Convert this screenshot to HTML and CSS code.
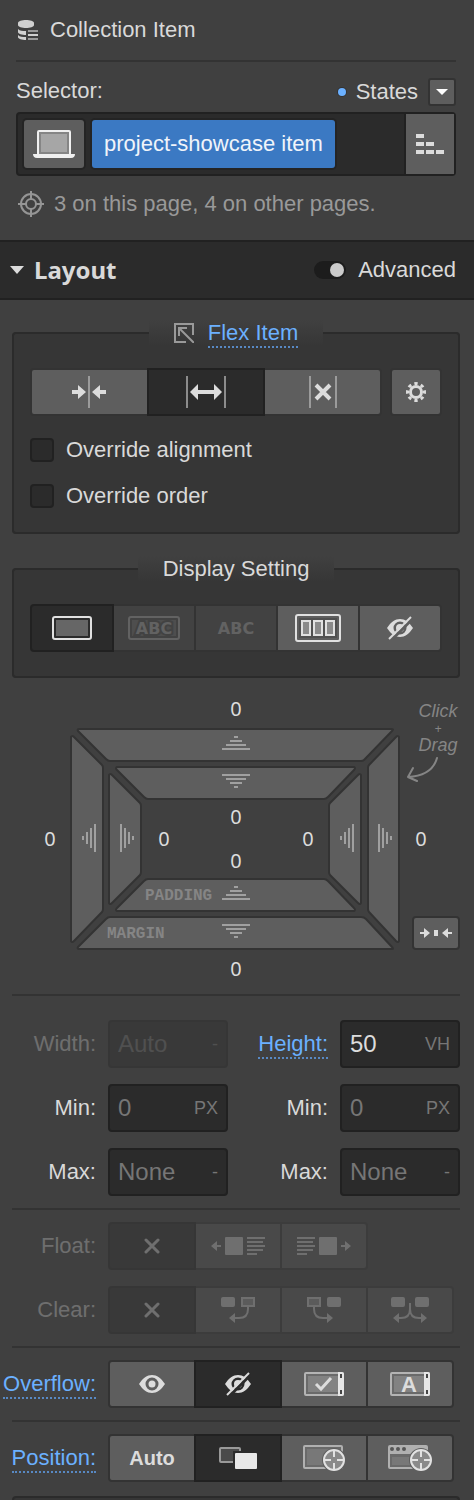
FILE: index.html
```html
<!DOCTYPE html>
<html lang="en">
<head>
  <meta charset="UTF-8">
  <meta name="viewport" content="width=device-width, initial-scale=1.0">
  <title>Style Panel</title>
  <link rel="stylesheet" href="styles.css">
</head>
<body>
  <!-- Shared icons -->
  <svg class="sprite" aria-hidden="true">
    <symbol id="eye" viewBox="0 0 26 18">
      <path fill="currentColor" fill-rule="evenodd" d="M0 9C4 3 8 0 13 0s9 3 13 9c-4 6-8 9-13 9S4 15 0 9zM13 2.500a6.500 6.500 0 1 0 0 13a6.500 6.500 0 1 0 0-13z"/>
      <circle cx="13" cy="9" r="3.500" fill="currentColor"/>
    </symbol>
    <symbol id="eye-off" viewBox="0 0 26 24">
      <path fill="currentColor" fill-rule="evenodd" d="M0 12C4 6 8 3 13 3s9 3 13 9c-4 6-8 9-13 9S4 18 0 12zM13 5.500a6.500 6.500 0 1 0 0 13a6.500 6.500 0 1 0 0-13z"/>
      <circle cx="13" cy="12" r="4" fill="currentColor"/>
      <path class="cut" d="M4 24.500L26 2.500" stroke-width="3"/>
      <path d="M2 23L24 1" stroke="currentColor" stroke-width="2"/>
    </symbol>
    <symbol id="cross" viewBox="0 0 16 16">
      <path d="M2 2l12 12M14 2L2 14" stroke="currentColor" stroke-width="3" stroke-linecap="round"/>
    </symbol>
    <symbol id="ticks" viewBox="0 0 28 14">
      <path fill="#a0a0a0" d="M12 0h4v2h-4zM8 4h12v2H8zM4 8h20v2H4zM0 12h28v2H0z"/>
    </symbol>
    <symbol id="globe" viewBox="0 0 24 24">
      <circle fill="#5e5e5e" cx="12" cy="12" r="12"/>
      <circle cx="12" cy="12" r="10" fill="#8a8a8a" stroke="#e2e2e2" stroke-width="2"/>
      <path d="M12 2v7M12 15v7M2 12h7M15 12h7" stroke="#e2e2e2" stroke-width="2"/>
    </symbol>
  </svg>

  <header class="element-head">
    <svg width="20" height="20" viewBox="0 0 20 20">
      <path fill="#d0d0d0" d="M0 3c0-4 16-4 16 0v2c0 4-16 4-16 0z"/>
      <path fill="#d0d0d0" d="M0 9c2 2 4 2 8 2v4c-4 0-8-1-8-3zM0 15c2 2 4 2 8 2v3c-4 0-8-1-8-3z"/>
      <path fill="#9a9a9a" d="M10 10h10v2H10zM10 18h10v2H10z"/>
      <path fill="#d0d0d0" d="M10 14h10v2H10z"/>
    </svg>
    <span>Collection Item</span>
  </header>

  <!-- Selector -->
  <section class="selector">
    <div class="selector-row">
      <label for="selectorInput">Selector:</label>
      <div class="states">
        <span class="dot"></span>
        <span>States</span>
        <button class="states-btn" aria-label="Choose state">
          <svg width="12" height="6" viewBox="0 0 12 6"><path fill="#fff" d="M0 0h12L6 6z"/></svg>
        </button>
      </div>
    </div>
    <div class="selector-box">
      <button class="device-btn" aria-label="Desktop">
        <svg width="42" height="28" viewBox="0 0 42 28">
          <rect x="5" y="1" width="32" height="24" rx="1" fill="#858585" stroke="#f0f0f0" stroke-width="2"/>
          <rect x="8" y="4" width="26" height="18" fill="#a6a6a6"/>
          <path fill="#f0f0f0" d="M0 24h42c0 2-1 4-4 4H4c-3 0-4-2-4-4z"/>
        </svg>
      </button>
      <button class="chip">project-showcase item</button>
      <input class="selector-input" id="selectorInput" type="text">
      <button class="inherit-btn" aria-label="Inheritance">
        <svg width="28" height="20" viewBox="0 0 28 20"><path fill="#dcdcdc" d="M0 0h8v4H0zM0 8h8v4H0zM10 8h8v4h-8zM0 16h8v4H0zM10 16h8v4h-8zM20 16h8v4h-8z"/></svg>
      </button>
    </div>
    <p class="usage">
      <svg width="26" height="26" viewBox="0 0 26 26" fill="none" stroke="#959595" stroke-width="2">
        <circle cx="13" cy="13" r="10"/>
        <circle cx="13" cy="13" r="5"/>
        <path d="M13 0v8M13 18v8M0 13h8M18 13h8"/>
      </svg>
      <span>3 on this page, 4 on other pages.</span>
    </p>
  </section>

  <div class="section-head">
    <svg width="14" height="8" viewBox="0 0 14 8"><path fill="#dcdcdc" d="M0 0h14L7 8z"/></svg>
    <h2>Layout</h2>
    <input class="toggle" type="checkbox" id="advanced" checked>
    <label for="advanced">Advanced</label>
  </div>

  <main>
    <!-- Flex item -->
    <fieldset class="group-box">
      <legend>
        <svg width="20" height="20" viewBox="0 0 20 20" fill="none" stroke="#999" stroke-width="2">
          <path d="M12 19H1V1h18v11M5 13V5h8M6 6l14 14"/>
        </svg>
        <a href="#" class="set">Flex Item</a>
      </legend>
      <div class="btn-line">
        <div class="btn-group">
          <button class="btn" aria-label="Shrink if needed">
            <svg width="34" height="32" viewBox="0 0 34 32">
              <path fill="#9b9b9b" d="M16 0h2v32h-2z"/>
              <path fill="#dcdcdc" d="M0 14h6V9l8 7-8 7v-5H0zM34 14h-6V9l-8 7 8 7v-5h6z"/>
            </svg>
          </button>
          <button class="btn active" aria-label="Grow if possible">
            <svg width="40" height="32" viewBox="0 0 40 32">
              <path fill="#8c8c8c" d="M0 0h2v32H0zM38 0h2v32h-2z"/>
              <path fill="#dcdcdc" d="M4 16l8-8v6h16V8l8 8-8 8v-6H12v6z"/>
            </svg>
          </button>
          <button class="btn" aria-label="Do not shrink or grow">
            <svg width="28" height="32" viewBox="0 0 28 32">
              <path fill="#9b9b9b" d="M0 0h2v32H0zM26 0h2v32h-2z"/>
              <path stroke="#dcdcdc" stroke-width="4" d="M7 9l14 14M21 9L7 23"/>
            </svg>
          </button>
        </div>
        <button class="btn btn-gear" aria-label="Customize">
          <svg width="20" height="20" viewBox="0 0 20 20" fill="none" stroke="#dcdcdc" stroke-width="3">
            <circle cx="10" cy="10" r="5.500"/>
            <circle cx="10" cy="10" r="8.500" pathLength="16" stroke-dasharray="1 1" stroke-dashoffset="0.500"/>
          </svg>
        </button>
      </div>
      <div class="check-row">
        <input type="checkbox" id="alignment">
        <label for="alignment">Override alignment</label>
      </div>
      <div class="check-row">
        <input type="checkbox" id="order">
        <label for="order">Override order</label>
      </div>
    </fieldset>

    <!-- Display -->
    <fieldset class="group-box display-box">
      <legend>Display Setting</legend>
      <div class="btn-group">
        <button class="btn active" aria-label="Block">
          <svg width="40" height="24" viewBox="0 0 40 24">
            <rect x="1" y="1" width="38" height="22" rx="2" fill="none" stroke="#e0e0e0" stroke-width="2"/>
            <rect x="4" y="4" width="32" height="16" fill="#666"/>
          </svg>
        </button>
        <button class="btn off" disabled aria-label="Inline block">
          <svg width="52" height="24" viewBox="0 0 52 24">
            <rect x="1" y="1" width="50" height="22" rx="2" fill="none" stroke="#626262" stroke-width="2"/>
            <rect x="4" y="4" width="44" height="16" fill="#4e4e4e"/>
            <text class="abc outlined" x="26" y="18" text-anchor="middle">ABC</text>
          </svg>
        </button>
        <button class="btn off" disabled><span class="abc">ABC</span></button>
        <button class="btn" aria-label="Flex">
          <svg width="46" height="28" viewBox="0 0 46 28" fill="none" stroke="#e0e0e0" stroke-width="2">
            <rect x="1" y="1" width="44" height="26" rx="2"/>
            <path fill="#505050" stroke="none" d="M4 4h38v20H4z"/>
            <path fill="#8a8a8a" d="M7 7h8v14H7zM19 7h8v14h-8zM31 7h8v14h-8z"/>
          </svg>
        </button>
        <button class="btn" aria-label="None"><svg class="icon" width="26" height="24"><use href="#eye-off"/></svg></button>
      </div>
    </fieldset>

    <!-- Margin and padding -->
    <div class="box-model">
      <svg class="box-svg" viewBox="12 696 448 298">
        <g fill="#5e5e5e" stroke="#333" stroke-width="2" stroke-linejoin="round">
          <path d="M79 729H392Q394 729 392 731L364 760Q363 761 361 761H110Q108 761 106 759L78 731Q77 729 79 729z"/>
          <path d="M79 949H392Q394 949 392 947L366 919Q364 917 361 917H110Q108 917 106 919L78 947Q77 949 79 949z"/>
          <path d="M71 737Q72 735 74 737L102 765Q103 766 103 768V909Q103 911 102 912L74 941Q72 943 71 941z"/>
          <path d="M399 737Q398 735 396 737L369 765Q368 766 368 768V909Q368 911 369 912L396 941Q398 943 399 941z"/>
          <path d="M117 767H354Q356 768 354 770L328 797Q326 799 324 799H148Q146 799 144 797L117 770Q115 768 117 767z"/>
          <path d="M117 911H354Q356 910 354 908L328 881Q326 879 324 879H148Q146 879 144 881L117 908Q115 910 117 911z"/>
          <path d="M109 775Q110 773 112 775L140 803Q141 804 141 806V872Q141 874 140 875L112 903Q110 905 109 903z"/>
          <path d="M361 775Q360 773 358 775L330 803Q329 804 329 806V872Q329 874 330 875L358 903Q360 905 361 903z"/>
        </g>
        <use href="#ticks" x="222" y="736" width="28" height="14"/>
        <use href="#ticks" x="222" y="886" width="28" height="14"/>
        <use href="#ticks" x="-14" y="-7" width="28" height="14" transform="translate(236 781) rotate(180)"/>
        <use href="#ticks" x="-14" y="-7" width="28" height="14" transform="translate(236 931) rotate(180)"/>
        <use href="#ticks" x="-14" y="-7" width="28" height="14" transform="translate(89 838) rotate(-90)"/>
        <use href="#ticks" x="-14" y="-7" width="28" height="14" transform="translate(347 838) rotate(-90)"/>
        <use href="#ticks" x="-14" y="-7" width="28" height="14" transform="translate(127 838) rotate(90)"/>
        <use href="#ticks" x="-14" y="-7" width="28" height="14" transform="translate(385 838) rotate(90)"/>
        <g class="value">
          <text x="236" y="716">0</text>
          <text x="236" y="824">0</text>
          <text x="236" y="868">0</text>
          <text x="236" y="976">0</text>
          <text x="50" y="846">0</text>
          <text x="164" y="846">0</text>
          <text x="308" y="846">0</text>
          <text x="421" y="846">0</text>
        </g>
        <g class="box-name">
          <text x="145" y="900">PADDING</text>
          <text x="107" y="938">MARGIN</text>
        </g>
        <g class="hint">
          <text x="438" y="717">Click</text>
          <text class="plus" x="438" y="733">+</text>
          <text x="438" y="751">Drag</text>
        </g>
        <path fill="none" stroke="#858585" stroke-width="2" stroke-linecap="round" stroke-linejoin="round" d="M437 758C434 769 426 776 408 777M413 768l-5 9 9 4"/>
      </svg>
      <button class="auto-margin" aria-label="Center element">
        <svg width="32" height="10" viewBox="0 0 32 10"><path fill="#dcdcdc" d="M0 4h4V0l6 5-6 5V6H0zM14 2h4v6h-4zM32 4h-4V0l-6 5 6 5V6h4z"/></svg>
      </button>
    </div>

    <!-- Size -->
    <div class="size-grid">
      <label for="width" class="dim">Width:</label>
      <div class="field dim"><input id="width" type="text" placeholder="Auto" disabled><span>-</span></div>
      <label for="height"><span class="set">Height:</span></label>
      <div class="field"><input id="height" type="text" value="50"><span>VH</span></div>
      <label for="minWidth">Min:</label>
      <div class="field"><input id="minWidth" type="text" placeholder="0"><span>PX</span></div>
      <label for="minHeight">Min:</label>
      <div class="field"><input id="minHeight" type="text" placeholder="0"><span>PX</span></div>
      <label for="maxWidth">Max:</label>
      <div class="field"><input id="maxWidth" type="text" placeholder="None"><span>-</span></div>
      <label for="maxHeight">Max:</label>
      <div class="field"><input id="maxHeight" type="text" placeholder="None"><span>-</span></div>
    </div>

    <!-- Float and clear -->
    <div class="option-rows">
      <div class="option dim">
        <span class="option-name" id="floatName">Float:</span>
        <div class="btn-group three" role="group" aria-labelledby="floatName">
          <button class="btn active" disabled aria-label="None"><svg class="icon" width="16" height="16"><use href="#cross"/></svg></button>
          <button class="btn" disabled aria-label="Left">
            <svg width="54" height="18" viewBox="0 0 54 18" fill="#dcdcdc">
              <path d="M0 9l6-5v4h4v2H6v4z"/>
              <rect x="14" width="18" height="18" rx="1"/>
              <path d="M36 0h18v2H36zM36 4h16v2H36zM36 8h18v2H36zM36 12h16v2H36zM36 16h10v2H36z"/>
            </svg>
          </button>
          <button class="btn" disabled aria-label="Right">
            <svg width="54" height="18" viewBox="0 0 54 18" fill="#dcdcdc">
              <path d="M54 9l-6-5v4h-4v2h4v4z"/>
              <rect x="22" width="18" height="18" rx="1"/>
              <path d="M0 0h18v2H0zM0 4h16v2H0zM0 8h18v2H0zM0 12h16v2H0zM0 16h10v2H0z"/>
            </svg>
          </button>
        </div>
      </div>
      <div class="option dim">
        <span class="option-name" id="clearName">Clear:</span>
        <div class="btn-group" role="group" aria-labelledby="clearName">
          <button class="btn active" disabled aria-label="None"><svg class="icon" width="16" height="16"><use href="#cross"/></svg></button>
          <button class="btn" disabled aria-label="Left">
            <svg width="34" height="26" viewBox="0 0 34 26">
              <rect width="14" height="10" rx="2" fill="#dcdcdc"/>
              <rect x="21" y="1" width="12" height="8" fill="#999" stroke="#dcdcdc" stroke-width="2"/>
              <path d="M27 10v2c0 6-3 9-9 9h-4" fill="none" stroke="#dcdcdc" stroke-width="2"/>
              <path d="M8 21l6-5v10z" fill="#dcdcdc"/>
            </svg>
          </button>
          <button class="btn" disabled aria-label="Right">
            <svg width="34" height="26" viewBox="0 0 34 26">
              <rect x="20" width="14" height="10" rx="2" fill="#dcdcdc"/>
              <rect x="1" y="1" width="12" height="8" fill="#999" stroke="#dcdcdc" stroke-width="2"/>
              <path d="M7 10v2c0 6 3 9 9 9h4" fill="none" stroke="#dcdcdc" stroke-width="2"/>
              <path d="M26 21l-6-5v10z" fill="#dcdcdc"/>
            </svg>
          </button>
          <button class="btn" disabled aria-label="Both">
            <svg width="38" height="26" viewBox="0 0 38 26">
              <path fill="#dcdcdc" d="M2 0h10a2 2 0 0 1 2 2v6a2 2 0 0 1-2 2H2a2 2 0 0 1-2-2V2a2 2 0 0 1 2-2zM26 0h10a2 2 0 0 1 2 2v6a2 2 0 0 1-2 2H26a2 2 0 0 1-2-2V2a2 2 0 0 1 2-2z"/>
              <path d="M19 6v6c0 6-3 9-9 9H8M19 12c0 6 3 9 9 9h2" fill="none" stroke="#dcdcdc" stroke-width="2"/>
              <path d="M2 21l6-5v10zM36 21l-6-5v10z" fill="#dcdcdc"/>
            </svg>
          </button>
        </div>
      </div>
    </div>

    <!-- Overflow -->
    <div class="option-rows">
      <div class="option">
        <span class="option-name"><a href="#" class="set" id="overflowName">Overflow:</a></span>
        <div class="btn-group" role="group" aria-labelledby="overflowName">
          <button class="btn" aria-label="Visible"><svg class="icon" width="26" height="18"><use href="#eye"/></svg></button>
          <button class="btn active" aria-label="Hidden"><svg class="icon" width="26" height="24"><use href="#eye-off"/></svg></button>
          <button class="btn" aria-label="Scroll">
            <svg width="40" height="24" viewBox="0 0 40 24">
              <rect x="1" y="1" width="38" height="22" rx="1" fill="#6a6a6a" stroke="#b4b4b4" stroke-width="2"/>
              <path fill="#828282" d="M4 4h30v16H4z"/>
              <path d="M12 12l5 5 10-11" fill="none" stroke="#dcdcdc" stroke-width="3"/>
              <path fill="#e6e6e6" d="M34 0h4a2 2 0 0 1 2 2v20a2 2 0 0 1-2 2h-4z"/>
              <path fill="#444" d="M36 2h2v4h-2zM36 18h2v4h-2z"/>
            </svg>
          </button>
          <button class="btn" aria-label="Auto">
            <svg width="40" height="24" viewBox="0 0 40 24">
              <rect x="1" y="1" width="38" height="22" rx="1" fill="#6a6a6a" stroke="#b4b4b4" stroke-width="2"/>
              <path fill="#828282" d="M4 4h30v16H4z"/>
              <text class="letter" x="19" y="20" text-anchor="middle">A</text>
              <path fill="#e6e6e6" d="M34 0h4a2 2 0 0 1 2 2v20a2 2 0 0 1-2 2h-4z"/>
              <path fill="#444" d="M36 2h2v4h-2zM36 18h2v4h-2z"/>
            </svg>
          </button>
        </div>
      </div>
    </div>

    <!-- Position -->
    <div class="option-rows">
      <div class="option">
        <span class="option-name"><a href="#" class="set" id="positionName">Position:</a></span>
        <div class="btn-group" role="group" aria-labelledby="positionName">
          <button class="btn">Auto</button>
          <button class="btn active" aria-label="Relative">
            <svg width="38" height="22" viewBox="0 0 38 22">
              <rect x="1" y="1" width="20" height="14" rx="1" fill="#4a4a4a" stroke="#999" stroke-width="2"/>
              <path fill="#2b2b2b" d="M14 4h24v18H14z"/>
              <rect x="16" y="6" width="22" height="16" rx="1" fill="#e8e8e8"/>
            </svg>
          </button>
          <button class="btn" aria-label="Absolute">
            <svg width="42" height="28" viewBox="0 0 42 28">
              <rect x="1" y="2" width="38" height="22" rx="1" fill="#6a6a6a" stroke="#b0b0b0" stroke-width="2"/>
              <path fill="#787878" d="M4 5h32v16H4z"/>
              <use href="#globe" x="19" y="4" width="24" height="24"/>
            </svg>
          </button>
          <button class="btn" aria-label="Fixed">
            <svg width="44" height="28" viewBox="0 0 44 28">
              <rect x="1" y="2" width="38" height="22" rx="1" fill="#6a6a6a" stroke="#b0b0b0" stroke-width="2"/>
              <path fill="#787878" d="M4 13h32v8H4z"/>
              <path fill="#b0b0b0" d="M1 2h38v8H1z"/>
              <path d="M4 5h0M10 5h0M16 5h0" stroke="#555" stroke-width="4" stroke-linecap="round"/>
              <use href="#globe" x="21" y="4" width="24" height="24"/>
            </svg>
          </button>
        </div>
      </div>
    </div>
    <div class="next-box"></div>
  </main>
</body>
</html>
```

FILE: styles.css
```css
* {
  box-sizing: border-box;
}
body {
  margin: 0;
  background: #404040;
  color: #d9d9d9;
  font-family: "Liberation Sans", Arial, sans-serif;
  font-size: 22px;
  line-height: 26px;
}
button, input {
  font-family: inherit;
  margin: 0;
  padding: 0;
}
button {
  display: flex;
  align-items: center;
  justify-content: center;
  color: #dcdcdc;
}
svg {
  display: block;
  flex-shrink: 0;
}
.sprite {
  position: absolute;
  width: 0;
  height: 0;
}
/* Blue underlined names mark values set on this class */
.set {
  display: inline-block;
  margin-bottom: -2px;
  color: #6bb0ff;
  text-decoration: none;
  border-bottom: 2px dotted #5889c4;
}
.dim {
  opacity: 0.3;
}

/* Element name */
.element-head {
  display: flex;
  align-items: center;
  gap: 12px;
  height: 62px;
  margin: 0 18px 0 16px;
  padding-left: 2px;
  border-bottom: 2px solid #333;
}

/* Selector */
.selector {
  padding: 16px 18px 22px 16px;
}
.selector-row {
  display: flex;
  align-items: flex-start;
  justify-content: space-between;
}
.states {
  display: flex;
  align-items: center;
  gap: 10px;
}
.dot {
  width: 8px;
  height: 8px;
  border-radius: 50%;
  background: #6bb0ff;
  box-shadow: 0 0 0 1px #333;
}
.states-btn {
  width: 28px;
  height: 28px;
  background: #5e5e5e;
  border: 2px solid #333;
  border-radius: 3px;
}
.selector-box {
  display: flex;
  gap: 8px;
  height: 64px;
  margin-top: 6px;
  padding-left: 6px;
  background: #2b2b2b;
  border: 2px solid #212121;
  border-radius: 4px;
}
.device-btn, .chip {
  height: 48px;
  margin-top: 6px;
  border: none;
  border-radius: 3px;
  background: #5e5e5e;
  box-shadow: 0 0 0 2px #242424;
}
.device-btn {
  width: 60px;
}
.chip {
  padding: 0 12px;
  background: #3b79c3;
  color: #f0f4fa;
  font-size: 22px;
  white-space: nowrap;
}
.selector-input {
  flex: 1;
  min-width: 0;
  border: none;
  background: transparent;
  color: #d9d9d9;
  font-size: 22px;
}
.inherit-btn {
  width: 50px;
  background: #5e5e5e;
  border: none;
  border-left: 2px solid #212121;
}
.usage {
  display: flex;
  align-items: center;
  gap: 10px;
  height: 28px;
  margin: 14px 0 0;
  padding: 0 2px;
  color: #999;
}

/* Section heading */
.section-head {
  display: flex;
  align-items: center;
  height: 60px;
  padding: 0 18px 0 10px;
  background: #2b2b2b;
  border-top: 2px solid #212121;
  border-bottom: 2px solid #212121;
}
.section-head h2 {
  flex: 1;
  margin: 0;
  padding-left: 10px;
  font-family: "Noto Sans", "Open Sans", sans-serif;
  font-size: 24px;
  line-height: 28px;
}
.toggle {
  appearance: none;
  display: flex;
  align-items: center;
  justify-content: flex-end;
  width: 32px;
  height: 18px;
  margin-right: 12px;
  padding: 2px;
  border-radius: 9px;
  background: #1c1c1c;
}
.toggle::after {
  content: "";
  width: 14px;
  height: 14px;
  border-radius: 50%;
  background: #cbcbcb;
}

/* Group boxes */
.group-box {
  min-width: 0;
  margin: 20px 14px 0 12px;
  padding: 22px 16px 24px;
  background: #363636;
  border: 2px solid #2b2b2b;
  border-radius: 4px;
}
.group-box legend {
  display: flex;
  align-items: center;
  gap: 14px;
  margin: 0 auto;
  padding: 0 25px;
  height: 26px;
  background: linear-gradient(#404040, #363636);
}
.btn-line {
  display: flex;
  gap: 8px;
}
.btn-group {
  display: flex;
  flex: 1;
  min-width: 0;
}
.btn {
  flex: 1;
  min-width: 0;
  height: 48px;
  background: #5e5e5e;
  border: 2px solid #333;
  font-size: 20px;
  font-weight: bold;
}
.btn + .btn {
  margin-left: -2px;
}
.btn:first-child {
  border-radius: 4px 0 0 4px;
}
.btn:last-child {
  border-radius: 0 4px 4px 0;
}
.btn.active {
  position: relative;
  background: #2b2b2b;
  border-color: #212121;
}
.btn.off {
  background: #424242;
}
.btn.btn-gear {
  flex: none;
  width: 52px;
  border-radius: 4px;
}
.icon {
  color: #dcdcdc;
}
.active .icon {
  --cut: #2b2b2b;
}
.cut {
  stroke: var(--cut, #5e5e5e);
}
.abc {
  fill: #626262;
  color: #626262;
  font-family: "DejaVu Sans", sans-serif;
  font-size: 16px;
  font-weight: bold;
}
.outlined {
  stroke: #424242;
  stroke-width: 4px;
  paint-order: stroke;
}
.letter {
  fill: #dcdcdc;
  font-size: 22px;
  font-weight: bold;
}
.check-row {
  display: flex;
  align-items: center;
  gap: 12px;
  height: 24px;
  margin-top: 22px;
}
.check-row input {
  appearance: none;
  width: 24px;
  height: 24px;
  background: #2b2b2b;
  border: 2px solid #212121;
  border-radius: 4px;
}
.display-box {
  margin-top: 22px;
}

/* Margin and padding */
.box-model {
  position: relative;
  margin: 18px 14px 0 12px;
  border-bottom: 2px solid #333;
}
.box-svg {
  width: 100%;
}
.box-svg text {
  text-anchor: middle;
}
.value {
  fill: #dcdcdc;
  font-family: "Noto Sans", "Open Sans", sans-serif;
  font-size: 20px;
}
.box-svg .box-name text {
  fill: #858585;
  font-family: "Liberation Mono", monospace;
  font-size: 16px;
  font-weight: bold;
  text-anchor: start;
}
.hint {
  fill: #858585;
  font-size: 18px;
  font-style: italic;
}
.hint .plus {
  font-size: 12px;
}
.auto-margin {
  position: absolute;
  right: 0;
  bottom: 44px;
  width: 48px;
  height: 34px;
  background: #5e5e5e;
  border: 2px solid #333;
  border-radius: 4px;
}

/* Size fields */
.size-grid {
  display: grid;
  grid-template-columns: 96px 1fr 88px 1fr;
  align-items: center;
  gap: 16px 12px;
  padding: 24px 14px 12px 0;
}
.size-grid label {
  text-align: right;
}
.field {
  display: flex;
  align-items: center;
  height: 48px;
  padding: 0 8px;
  background: #2b2b2b;
  border: 2px solid #212121;
  border-radius: 4px;
}
.field input {
  flex: 1;
  width: 0;
  min-width: 0;
  border: none;
  background: transparent;
  color: #dcdcdc;
  font-size: 24px;
}
.field input::placeholder {
  color: #767676;
  opacity: 1;
}
.field span {
  color: #767676;
  font-size: 18px;
}

/* Label and button rows */
.option-rows {
  display: flex;
  flex-direction: column;
  gap: 16px;
  padding: 12px 20px 12px 0;
}
.option-rows::before {
  content: "";
  height: 2px;
  margin: -12px -6px -4px 12px;
  background: #333;
}
.option {
  display: flex;
  align-items: center;
  gap: 12px;
}
.option-name {
  width: 96px;
  text-align: right;
  white-space: nowrap;
}
.btn-group.three {
  flex: none;
  width: calc((100% - 102px) * 3 / 4 - 4px);
}
.next-box {
  height: 4px;
  margin: 2px 14px 0 12px;
  background: #363636;
  border: 2px solid #2b2b2b;
  border-bottom: none;
  border-radius: 4px 4px 0 0;
}
```
